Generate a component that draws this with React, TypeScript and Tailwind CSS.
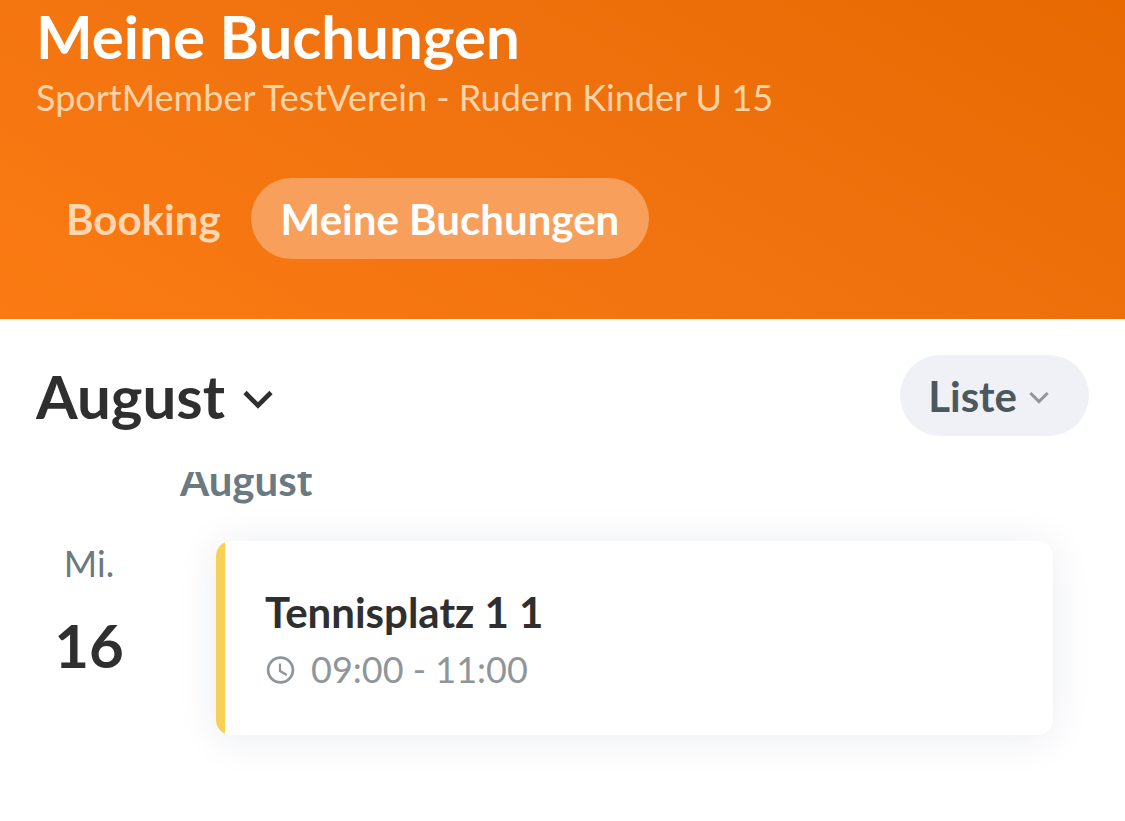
import { useState } from 'react';

const MONTHS = [
  'Januar',
  'Februar',
  'März',
  'April',
  'Mai',
  'Juni',
  'Juli',
  'August',
  'September',
  'Oktober',
  'November',
  'Dezember',
];

const TABS = ['Booking', 'Meine Buchungen'];

const BOOKINGS = [{ weekday: 'Mi.', day: 16, title: 'Tennisplatz 1 1', time: '09:00 - 11:00' }];

function Chevron({ className }: { className: string }) {
  return (
    <svg viewBox="0 0 30 28" fill="none" stroke="currentColor" strokeWidth="4.6" className={className} aria-hidden="true">
      <path d="M2 10.5 15 23.5 28 10.5" />
    </svg>
  );
}

function ClockIcon() {
  return (
    <svg viewBox="0 0 30 30" fill="none" stroke="currentColor" strokeWidth="2.7" className="size-[30px]" aria-hidden="true">
      <circle cx="15.5" cy="16" r="12.4" />
      <path d="M15 9.5V17l6.8 4" strokeWidth="2.2" />
    </svg>
  );
}

export default function App() {
  const [tab, setTab] = useState('Meine Buchungen');
  const [month, setMonth] = useState('August');

  return (
    <div className="min-h-screen bg-white font-[Lato,sans-serif] text-[#2f2f2f]">
      {/* Header */}
      <header className="bg-linear-30 from-[#fb7a12] via-[#f07310] to-[#e76900] px-9 pb-[60px]">
        <h1 className="text-[60px] leading-[72px] font-bold text-white">Meine Buchungen</h1>
        <p className="text-[36px] leading-[50px] text-[#ffd3a6]">SportMember TestVerein - Rudern Kinder U 15</p>

        <nav className="mt-14 flex">
          {TABS.map((name) => (
            <button
              key={name}
              type="button"
              onClick={() => setTab(name)}
              className={`h-[81px] rounded-full px-[30px] text-[42px] leading-[50px] font-bold ${
                name === tab ? 'bg-[#f79f5b] text-white' : 'text-[#ffd6ae]'
              }`}
            >
              {name}
            </button>
          ))}
        </nav>
      </header>

      <main>
        {/* Month and view pickers */}
        <div className="flex items-center justify-between px-9 py-9">
          <label className="flex items-center gap-[18px]">
            <select
              aria-label="Monat"
              value={month}
              onChange={(e) => setMonth(e.target.value)}
              className="field-sizing-content appearance-none bg-transparent text-[60px] leading-[72px] font-bold"
            >
              {MONTHS.map((m) => (
                <option key={m}>{m}</option>
              ))}
            </select>
            <Chevron className="w-[30px]" />
          </label>

          <label className="flex h-[81px] items-center gap-3 rounded-full bg-[#f0f1f6] pr-10 pl-7 text-[#4b585e]">
            <select
              aria-label="Ansicht"
              defaultValue="Liste"
              className="field-sizing-content appearance-none bg-transparent text-[42px] leading-[50px] font-bold"
            >
              <option>Liste</option>
              <option>Kalender</option>
            </select>
            <Chevron className="w-5 text-[#929699]" />
          </label>
        </div>

        {/* Bookings, scrolled under the pickers */}
        <section className="overflow-hidden px-9 pb-20">
          <h2 className="-mt-[17px] mb-9 ml-36 text-[42px] leading-[50px] font-bold text-[#6b7980]">{month}</h2>

          {BOOKINGS.map((b) => (
            <div key={b.day} className="flex">
              <div className="w-[106px] shrink-0 text-center">
                <p className="text-[36px] leading-[44px] text-[#6b7980]">{b.weekday}</p>
                <p className="mt-6 text-[60px] leading-[72px] font-bold">{b.day}</p>
              </div>

              <article className="mr-9 ml-[74px] flex flex-1 overflow-hidden rounded-[15px] bg-white shadow-[0_3px_42px_rgba(30,40,100,0.09)]">
                <div className="w-[9px] shrink-0 bg-[#f7d154]" />
                <div className="py-11 pl-10">
                  <h3 className="text-[42px] leading-[54px] font-bold">{b.title}</h3>
                  <p className="mt-2 flex items-center gap-4 text-[36px] leading-[44px] text-[#8f969a]">
                    <ClockIcon />
                    {b.time}
                  </p>
                </div>
              </article>
            </div>
          ))}
        </section>
      </main>
    </div>
  );
}
